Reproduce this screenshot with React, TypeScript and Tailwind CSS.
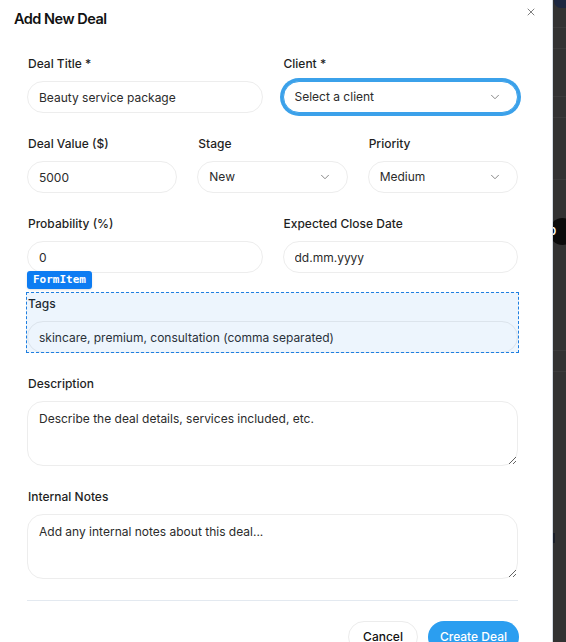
import { X, ChevronDown } from "lucide-react";

const inputCls =
  "w-full h-8 rounded-full border border-[#ededed] bg-white px-[11px] text-xs text-[#2b2b2b] placeholder:text-[#2b2b2b] outline-none";

const Label = ({ children }: { children: string }) => (
  <label className="block h-4 mb-[9px] pl-px text-xs leading-4 font-medium text-[#1f1f1f]">{children}</label>
);

const Select = ({ value, focused }: { value: string; focused?: boolean }) => (
  <div
    className={
      "flex h-8 w-full items-center justify-between rounded-full bg-white px-[11px] text-xs text-[#2b2b2b] " +
      (focused ? "border border-[#3ba1ea] ring-[3px] ring-[#3ba1ea]" : "border border-[#ededed]")
    }
  >
    <span>{value}</span>
    <ChevronDown size={14} strokeWidth={1.5} className="text-[#777] mr-1" />
  </div>
);

const Field = ({ label, children }: { label: string; children: React.ReactNode }) => (
  <div>
    <Label>{label}</Label>
    {children}
  </div>
);

export default function App() {
  return (
    <div className="flex h-[642px] w-[566px] overflow-hidden bg-[#323232] font-['Inter',sans-serif]">
      {/* dialog */}
      <div className="w-[553px] shrink-0 bg-white border-r border-[#d3dbe3]">
        <div className="flex items-start justify-between pl-[14px] pr-[15px]">
          <h2 className="pt-[9px] text-[14.5px] leading-5 font-semibold tracking-[-0.035em] text-[#111]">Add New Deal</h2>
          <button className="pt-[6px] text-[#555]">
            <X size={12} strokeWidth={1.5} />
          </button>
        </div>

        <form className="pt-[27px] pl-[27px] pr-[34px] space-y-[23px]">
          <div className="grid grid-cols-2 gap-5">
            <Field label="Deal Title *">
              <input className={inputCls} defaultValue="Beauty service package" />
            </Field>
            <Field label="Client *">
              <Select value="Select a client" focused />
            </Field>
          </div>

          <div className="grid grid-cols-3 gap-5">
            <Field label="Deal Value ($)">
              <input className={inputCls} defaultValue="5000" />
            </Field>
            <Field label="Stage">
              <Select value="New" />
            </Field>
            <Field label="Priority">
              <Select value="Medium" />
            </Field>
          </div>

          <div className="grid grid-cols-2 gap-5">
            <Field label="Probability (%)">
              <input className={inputCls} defaultValue="0" />
            </Field>
            <Field label="Expected Close Date">
              <input className={inputCls} placeholder="dd.mm.yyyy" />
            </Field>
          </div>

          {/* inspected item */}
          <div className="relative">
            <Label>Tags</Label>
            <input
              className={inputCls.replace("bg-white", "bg-transparent")}
              placeholder="skincare, premium, consultation (comma separated)"
            />
            <div className="pointer-events-none absolute -top-[4px] -left-px -right-px bottom-0 border border-dashed border-[#1f7fe0] bg-[#1a7fe6]/[0.08]" />
            <span className="absolute -top-[25px] left-0 h-[18px] rounded-[3px] bg-[#0d7cf2] px-[6px] font-['DejaVu_Sans_Mono',monospace] text-[11px] leading-[18px] font-semibold text-white shadow-sm">
              FormItem
            </span>
          </div>

          <Field label="Description">
            <textarea
              className="block w-full h-[65px] rounded-2xl border border-[#ededed] px-[11px] py-[9px] text-xs leading-4 text-[#2b2b2b] placeholder:text-[#2b2b2b] outline-none"
              placeholder="Describe the deal details, services included, etc."
            />
          </Field>

          <Field label="Internal Notes">
            <textarea
              className="block w-full h-[65px] rounded-2xl border border-[#ededed] px-[11px] py-[9px] text-xs leading-4 text-[#2b2b2b] placeholder:text-[#2b2b2b] outline-none"
              placeholder="Add any internal notes about this deal..."
            />
          </Field>
        </form>

        <div className="mx-[27px] mr-[34px] mt-[21px] border-t border-[#e3e9f0]" />

        <div className="flex justify-end gap-[10px] pt-5 pr-[33px]">
          <button className="h-8 rounded-full border border-[#ececec] bg-white px-[14px] text-xs font-medium text-[#111]">
            Cancel
          </button>
          <button className="h-8 rounded-full bg-[#2b9ef0] px-[12px] text-xs font-medium text-white">
            Create Deal
          </button>
        </div>
      </div>

      {/* page behind the dialog */}
      <div className="relative flex-1 overflow-hidden">
        <div className="h-[28px] border-b border-[#3b3b3b]" />
        <div className="h-[21px] border-b border-[#3b3b3b]" />
        <div className="h-[48px] border-b border-[#3b3b3b]" />
        <div className="h-[21px] border-b border-[#3b3b3b]" />
        <div className="h-[62px] border-b border-[#3b3b3b]" />
        <div className="h-[171px] border-b border-[#3b3b3b]" />
        <div className="h-[21px] border-b border-[#3b3b3b]" />
        <div className="absolute -top-[6px] left-[1px] h-[14px] w-[20px] rounded-full bg-[#1d2740]" />
        <div className="absolute top-[218px] -left-[4px] flex h-[27px] w-[27px] items-center rounded-full bg-[#0b0b0b] pl-0 text-[11px] font-semibold text-white">
          0
        </div>
        <div className="absolute top-[533px] left-0 h-[10px] w-[2px] bg-[#1a1f29]" />
      </div>
    </div>
  );
}
